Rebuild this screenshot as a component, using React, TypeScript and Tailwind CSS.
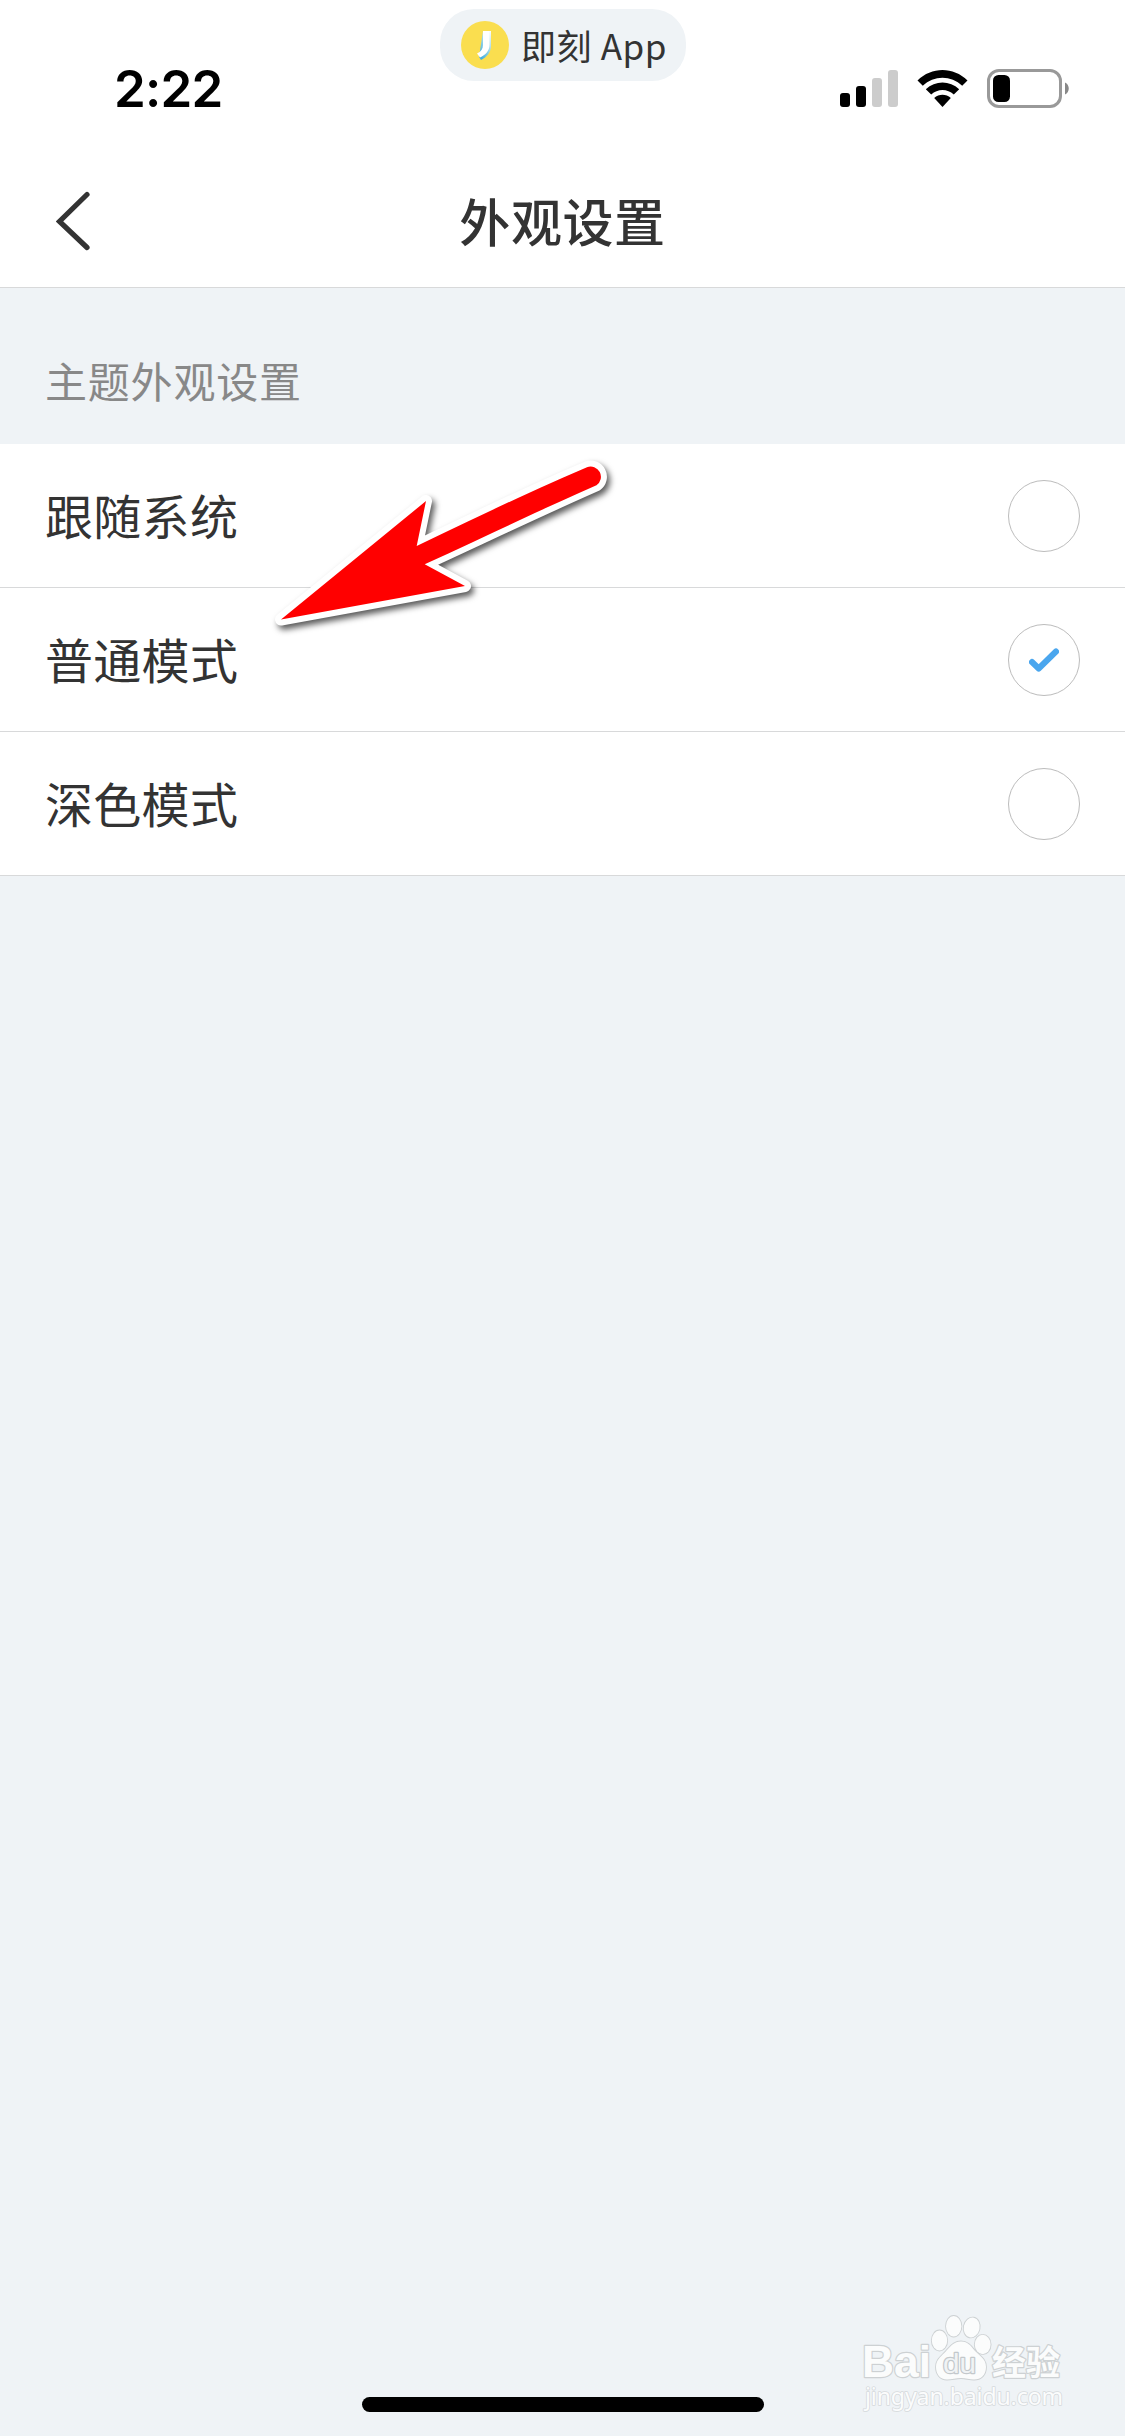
import React from "react";

const CJK = "font-['Noto_Sans_CJK_SC',sans-serif]";

function StatusIcons() {
  return (
    <div className="flex items-start">
      <svg className="mt-px" width="58" height="37" viewBox="0 0 58 37">
        <rect x="0" y="23" width="10" height="14" rx="3" fill="#000" />
        <rect x="16" y="16" width="10" height="21" rx="3" fill="#000" />
        <rect x="32" y="8" width="10" height="29" rx="3" fill="#ccc" />
        <rect x="48" y="0" width="10" height="37" rx="3" fill="#ccc" />
      </svg>
      <svg className="mt-px ml-[19px]" width="51" height="37" viewBox="0 0 51 37">
        <path d="M0.5 10.5 C14.5 -3.5 36.5 -3.5 50.5 10.5 L45.2 15.7 C34.2 5 16.8 5 5.8 15.7 Z" />
        <path d="M8.8 19.2 C18.2 10.3 32.8 10.3 42.2 19.2 L36.8 24.6 C30.4 18.6 20.6 18.6 14.2 24.6 Z" />
        <path d="M17.2 28 C22 23.8 29 23.8 33.8 28 L25.5 37 Z" />
      </svg>
      <svg className="ml-[19px]" width="83" height="39" viewBox="0 0 83 39">
        <rect x="1.5" y="1.5" width="72" height="36" rx="10.5" fill="none" stroke="#999" strokeWidth="3" />
        <rect x="6" y="6" width="17" height="27" rx="5.5" fill="#000" />
        <path d="M78 13.5 C83 15.5 83 23.5 78 25.5 Z" fill="#888" />
      </svg>
    </div>
  );
}

function AppPill() {
  return (
    <div className="absolute left-[440px] top-[9px] flex h-[72px] w-[246px] items-center rounded-[34px] bg-[#eff3f6] pl-[21px]">
      <svg width="48" height="48" viewBox="0 0 48 48">
        <defs>
          <linearGradient id="fold" x1="1" y1="0" x2="0.3" y2="1">
            <stop offset="0" stopColor="#fff" />
            <stop offset="0.45" stopColor="#a6dbe9" />
            <stop offset="1" stopColor="#45aede" />
          </linearGradient>
        </defs>
        <circle cx="24" cy="24" r="24" fill="#fade4f" />
        <path d="M22 10 H30 V25 C30 31 26 36 20 39 L18 36 Z" fill="url(#fold)" />
        <path d="M22 10 H28.5 V24 C28.5 29.5 24.5 34 19 36.5 L16 32.5 C20 30.5 22 28 22 24 Z" fill="#fff" />
      </svg>
      <span className={`-mt-[1px] ml-[12px] whitespace-nowrap text-[35px] leading-[52px] tracking-[0.6px] text-[#333] ${CJK}`}>
        即刻 App
      </span>
    </div>
  );
}

function Row({ label, checked }: { label: string; checked?: boolean }) {
  return (
    <li className="flex h-[144px] items-center justify-between border-b border-[#d8d9da] bg-white pr-[45px] pl-[45px]">
      <span className={`-mt-[3px] text-[48px] leading-[72px] tracking-[0.3px] text-[#333] ${CJK}`}>{label}</span>
      <span className="flex size-[72px] items-center justify-center rounded-full border border-[#bcbcbc]">
        {checked && (
          <svg width="30" height="24" viewBox="0 0 30 24">
            <path d="M3 14 L9.7 20.5 L27 3.5" fill="none" stroke="#4aa6ee" strokeWidth="6" strokeLinecap="round" strokeLinejoin="round" />
          </svg>
        )}
      </span>
    </li>
  );
}

function Arrow() {
  const d =
    "M21 169.5 L166 51 L156.7 96 C215 68.5 270 41 327 17.2 A10.3 10.3 0 0 1 336.5 35.3 C276 62 224 87 164.7 114.3 L205 136 Z";
  return (
    <svg className="absolute left-[260px] top-[450px] drop-shadow-[3px_4px_3px_rgba(0,0,0,0.65)]" width="380" height="200" viewBox="0 0 380 200">
      <path d={d} fill="#fff" stroke="#fff" strokeWidth="12" strokeLinejoin="round" />
      <path d={d} fill="#f00" />
    </svg>
  );
}

function Watermark() {
  return (
    <svg
      className="absolute left-[820px] top-[2290px]"
      width="305"
      height="146"
      viewBox="0 0 305 146"
      fill="#fbfcfc"
      stroke="#cdd1d3"
      strokeWidth="2.4"
      paintOrder="stroke"
      strokeLinejoin="round"
    >
      <text x="42" y="87" fontSize="45" fontWeight="700" textLength="69" lengthAdjust="spacingAndGlyphs" fontFamily="Liberation Sans, sans-serif">Bai</text>
      <g strokeWidth="1.8">
        <ellipse cx="119.5" cy="50.5" rx="7.7" ry="10" />
        <ellipse cx="133.7" cy="36.3" rx="7.7" ry="10.3" />
        <ellipse cx="151.7" cy="37.5" rx="7.9" ry="10" transform="rotate(12 151.7 37.5)" />
        <ellipse cx="162.7" cy="54.5" rx="7.9" ry="9.7" />
        <path d="M141 51.5 C148 51.5 151 56 155 61 C160 66 166 69 166 77 C166 85 161 89.5 154 89.5 C149 89.5 146 88 141 88 C136 88 132 89.5 127 89.5 C120 89.5 116 84 116 77 C116 69 122 66 127 60 C131 56 134 51.5 141 51.5 Z" />
      </g>
      <text x="123" y="83" fontSize="28" fontWeight="400" textLength="33" lengthAdjust="spacingAndGlyphs" fill="#f0f3f5" stroke="#c3c8cb" fontFamily="Liberation Sans, sans-serif">du</text>
      <text x="172" y="84.5" fontSize="34" fontWeight="700" textLength="68" fontFamily="Noto Sans CJK SC, sans-serif">经验</text>
      <text x="45" y="114.5" fontSize="23" textLength="198" strokeWidth="1.6" stroke="#d6dadc" fontFamily="Noto Sans, sans-serif">jingyan.baidu.com</text>
    </svg>
  );
}

export default function App() {
  return (
    <div className="relative flex h-[2436px] w-[1125px] flex-col overflow-hidden bg-[#eff3f6]">
      <header className="flex h-[288px] flex-col border-b border-[#d8d9da] bg-white">
        <div className="flex h-[156px] justify-between pt-[69px] pr-[55px] pl-[114px]">
          <time className="-mt-[11px] text-[51px] leading-[62px] font-semibold tracking-[-0.8px] text-black font-['Inter',sans-serif]">2:22</time>
          <StatusIcons />
        </div>
        <div className="grid h-[131px] grid-cols-[1fr_auto_1fr] items-center px-[56px]">
          <button aria-label="返回" className="-mt-[1px] justify-self-start">
            <svg width="34" height="60" viewBox="0 0 34 60" fill="none" stroke="#333" strokeWidth="5.2" strokeLinecap="round">
              <path d="M31 3.5 L3.5 30.5 L31 56.5" />
            </svg>
          </button>
          <h1 className={`-mt-[3px] text-[51px] leading-[76px] font-medium tracking-[0.6px] text-[#333] ${CJK}`}>外观设置</h1>
        </div>
      </header>
      <main>
        <h2 className={`flex h-[156px] items-end px-[45px] pb-[33px] text-[42px] leading-[62px] tracking-[0.8px] text-[#888] ${CJK}`}>
          主题外观设置
        </h2>
        <ul>
          <Row label="跟随系统" />
          <Row label="普通模式" checked />
          <Row label="深色模式" />
        </ul>
      </main>
      <div className="mx-auto mt-auto mb-[24px] h-[15px] w-[402px] rounded-full bg-black" />
      <AppPill />
      <Arrow />
      <Watermark />
    </div>
  );
}
